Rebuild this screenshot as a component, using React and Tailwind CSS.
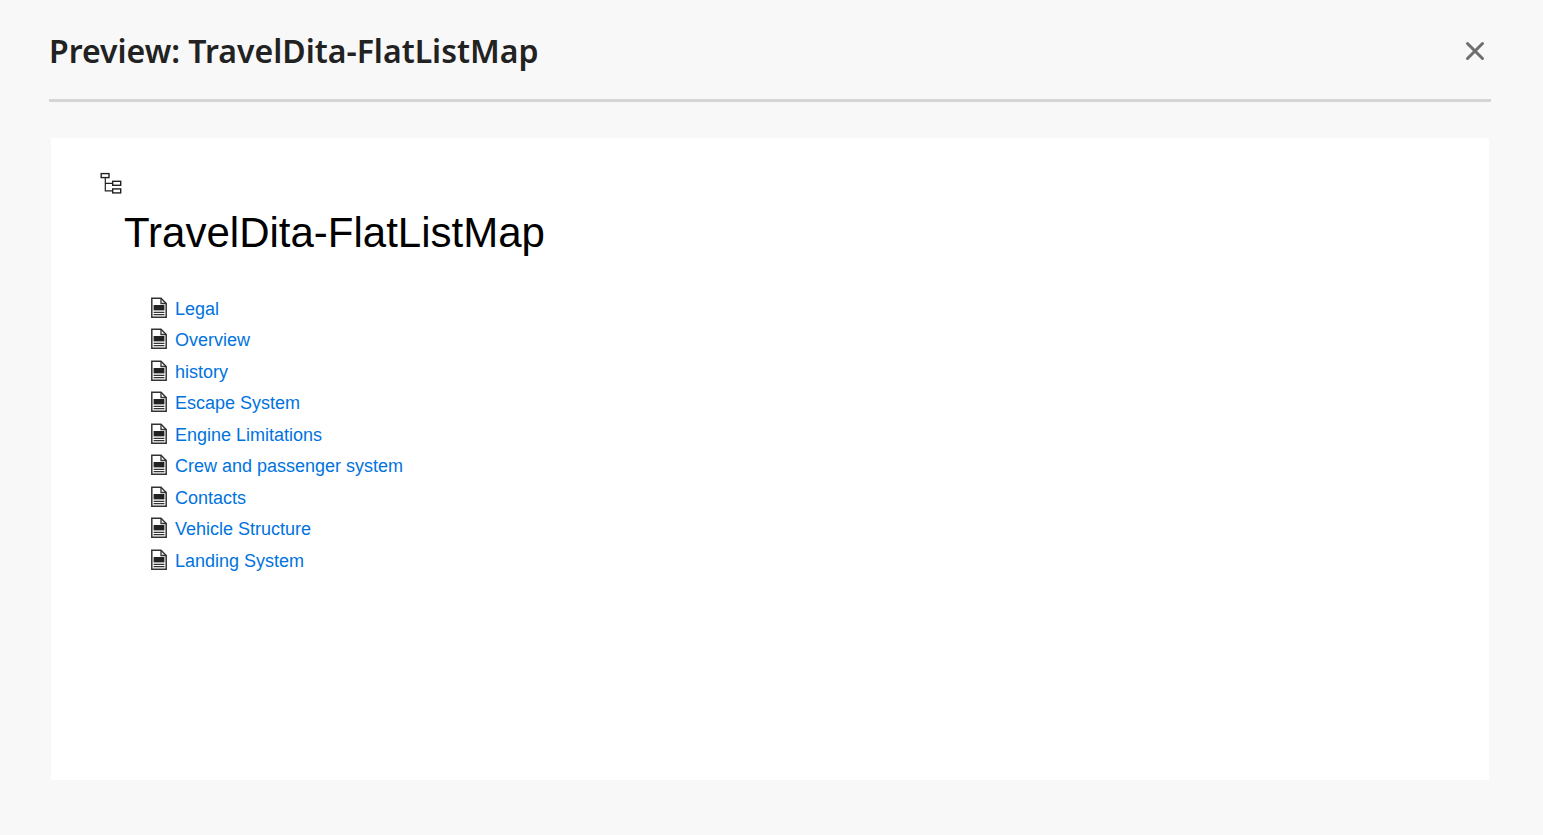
const topics = [
  'Legal',
  'Overview',
  'history',
  'Escape System',
  'Engine Limitations',
  'Crew and passenger system',
  'Contacts',
  'Vehicle Structure',
  'Landing System',
];

function CloseIcon() {
  return (
    <svg className="size-5" viewBox="0 0 20 20" fill="none" stroke="currentColor" strokeWidth="3" strokeLinecap="round" aria-hidden="true">
      <path d="M2.5 2.5l15 15M17.5 2.5l-15 15" />
    </svg>
  );
}

function MapIcon() {
  return (
    <svg className="block h-[22px] w-[22px]" viewBox="0 0 22 22" fill="none" stroke="#222" strokeWidth="1.4" aria-hidden="true">
      <rect x="1.2" y="1.6" width="7.8" height="4" />
      <rect x="12.7" y="9.3" width="8" height="4" />
      <rect x="12.7" y="16.9" width="8" height="4" />
      <path d="M5.3 5.6v13.2h7.4M5.3 11.3h7.4" strokeWidth="1.2" />
    </svg>
  );
}

function TopicIcon() {
  return (
    <svg className="h-[22px] w-4 shrink-0" viewBox="0 0 16 22" fill="none" stroke="#333" aria-hidden="true">
      <path d="M.8 1.3h9.2l5.2 5.2v13.8H.8z" strokeWidth="1.5" />
      <path d="M10 1.3v5.2h5.2" strokeWidth="1.3" />
      <path d="M2.6 8h10.8v5.4H2.6z" fill="#222" stroke="none" />
      <path d="M2.6 15.3h10.8M2.6 17.7h10.8" strokeWidth="1.3" />
    </svg>
  );
}

export default function App() {
  return (
    <div className="flex min-h-screen flex-col bg-[#f8f8f8] pr-[52px] pb-[55px] pl-[49px]">
      <header className="flex h-[102px] items-center justify-between rounded-b-[1px] border-b-[3px] border-[#d5d5d5] pt-[2px] pr-[6px]">
        <h1 className="font-['Noto_Sans',sans-serif] text-[32px] leading-10 font-semibold text-[#222]">
          Preview: TravelDita-FlatListMap
        </h1>
        <button type="button" aria-label="Close" className="text-[#6e6e6e]">
          <CloseIcon />
        </button>
      </header>
      <main className="mx-[2px] mt-9 flex-1 bg-white px-[49px] pt-[34px] font-['Liberation_Sans',Arial,sans-serif]">
        <MapIcon />
        <h2 className="mt-[15px] ml-6 text-[42px] leading-[48px] text-black">TravelDita-FlatListMap</h2>
        <ul className="mt-[37px] ml-[51px]">
          {topics.map((topic) => (
            <li key={topic} className="flex items-start gap-2 text-[18px] leading-[31px] even:pb-px">
              <span className="pt-[3px]">
                <TopicIcon />
              </span>
              <a href="#" className="text-[#0073de]">{topic}</a>
            </li>
          ))}
        </ul>
      </main>
    </div>
  );
}
